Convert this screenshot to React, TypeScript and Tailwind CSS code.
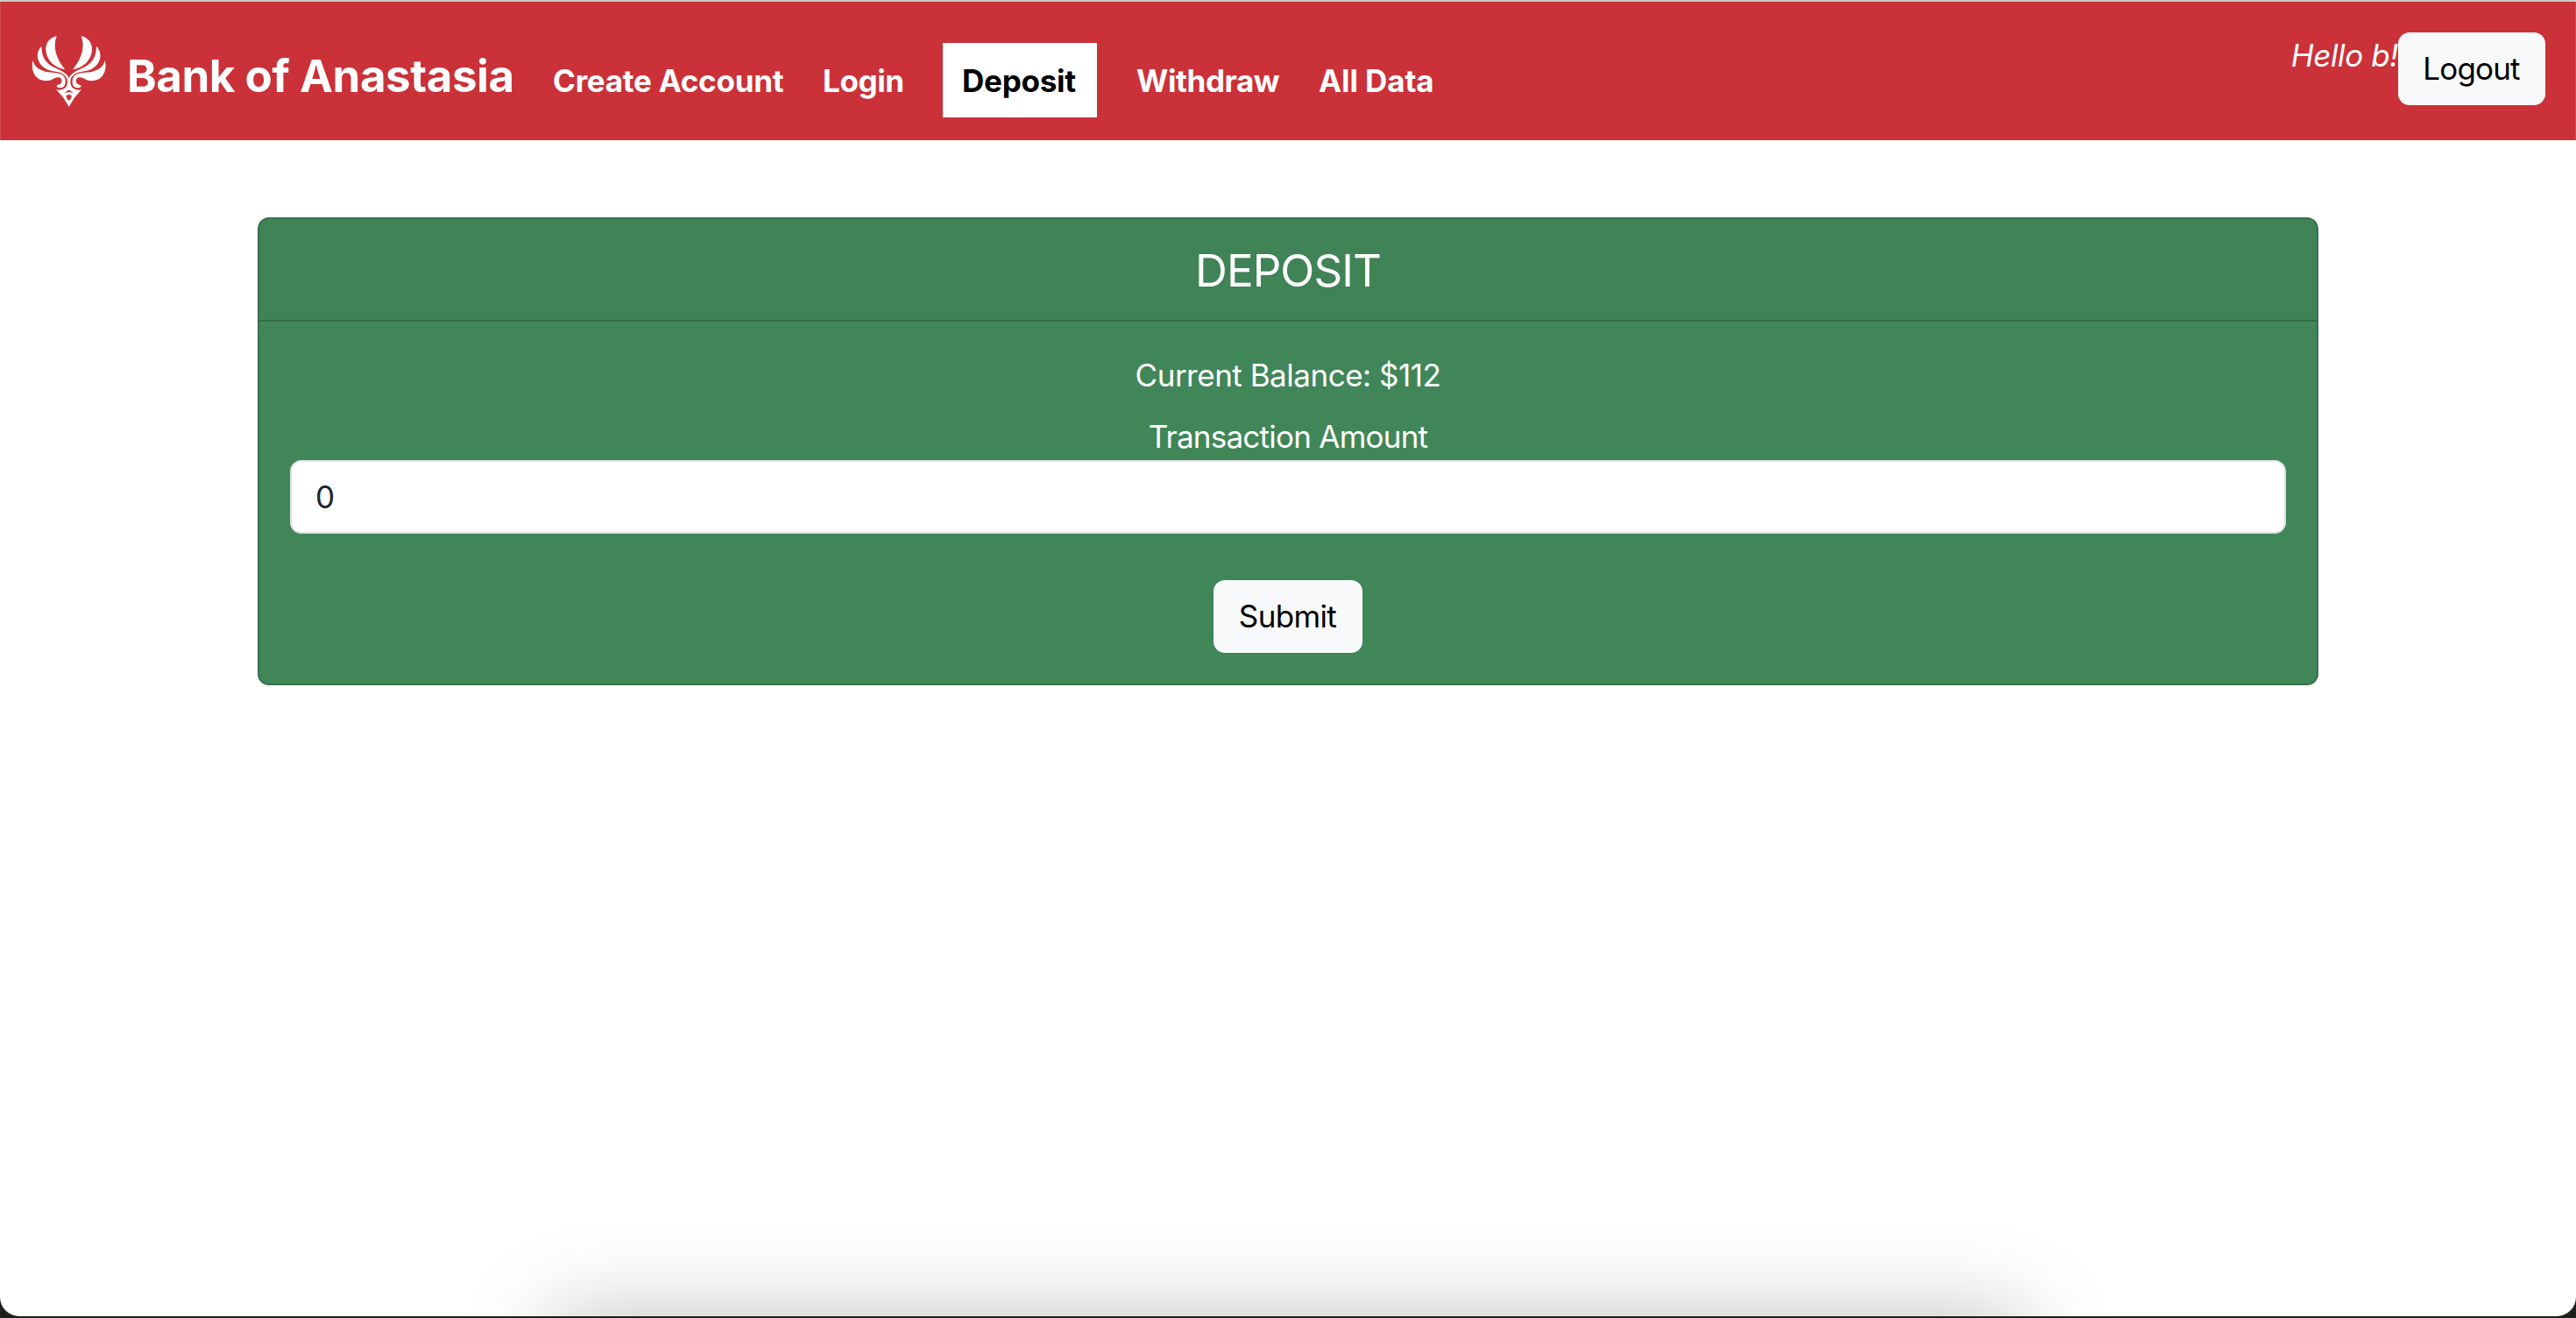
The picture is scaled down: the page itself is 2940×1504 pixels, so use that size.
import type { ReactNode } from 'react';

function WingHalf() {
  return (
    <g fill="#fff">
      <path d="M134 63C109 70 96 87 97 111C99 146 125 171 163 178C134 145 119 100 134 63Z" />
      <path d="M82 98C70 110 66 126 70 142C77 168 100 182 130 185C156 188 170 200 171 218C171 228 168 234 164 241H176.5V209C172 196 160 187 134 175C102 161 82 141 82 98Z" />
      <path d="M53 147C48 164 50 182 60 198C70 213 88 218 105 216C121 214 128 203 141 205C152 207 154 217 149 225C144 231 135 229 134 235C135 242 150 243 158 237C167 228 167 203 152 195C138 188 115 189 96 185C72 179 58 168 53 147Z" />
      <path d="M132 245C140 250 152 249 164 240H176.5V247L160 258L176.5 255V263L166 268L171 281L176.5 284V306L158 276Z" />
    </g>
  );
}

function Logo() {
  return (
    <svg viewBox="48 60 258 249" className="mt-[38px] h-[83px] w-[86px] shrink-0" aria-hidden="true">
      <WingHalf />
      <g transform="translate(352 0) scale(-1 1)">
        <WingHalf />
      </g>
    </svg>
  );
}

function NavItem({ children, className = '' }: { children: ReactNode; className?: string }) {
  return (
    <a href="#" className={`flex h-[85px] items-center px-[22px] pt-px ${className}`}>
      {children}
    </a>
  );
}

function LightButton({ children, className = '' }: { children: ReactNode; className?: string }) {
  return (
    <button
      type="button"
      className={`flex h-[83px] items-center justify-center rounded-[13px] bg-[#f8f9fb] pr-px pb-[2px] text-black ${className}`}
    >
      {children}
    </button>
  );
}

export default function App() {
  return (
    <div className="relative h-[1504px] w-full overflow-hidden bg-[#1c211c] font-['Inter',sans-serif] text-[35px] leading-[54px]">
      <div className="h-[1502px] overflow-hidden rounded-b-[22px] border-t-2 border-[#c9c9c9] bg-white">
        <header className="flex h-[158px] items-start border-x border-[#d04a50] bg-[#cb3138] pr-[34px] pl-[35px] text-white">
          <Logo />
          <a href="#" className="mt-[45px] ml-[23px] w-[464px] text-[51px] leading-[80px] font-bold tracking-[-0.43px] whitespace-nowrap">
            Bank of Anastasia
          </a>
          <nav className="mt-[47px] flex font-bold tracking-[-0.25px] whitespace-nowrap">
            <NavItem className="w-[308px]">Create Account</NavItem>
            <NavItem className="w-[159px] tracking-[-0.4px]">Login</NavItem>
            <NavItem className="w-[176px] bg-white text-black">Deposit</NavItem>
            <NavItem className="ml-[23px] w-[208px] tracking-[-0.4px]">Withdraw</NavItem>
            <NavItem className="tracking-[-0.1px]">All Data</NavItem>
          </nav>
          <p className="mt-[34px] ml-auto tracking-[-0.39px] whitespace-nowrap italic">Hello b!</p>
          <LightButton className="mt-[35px] w-[168px] tracking-[-0.85px]">Logout</LightButton>
        </header>

        <main className="mt-[88px] flex justify-center">
          <section className="h-[534px] w-[2352px] overflow-hidden rounded-[13px] border-2 border-[#38704b] bg-[#418658] text-center text-white">
            <h1 className="flex h-[117px] items-center justify-center border-b-2 border-[#356a47] bg-[#408356] pt-[2px] text-[51px] tracking-[-0.91px]">
              DEPOSIT
            </h1>
            <form className="flex flex-col px-[35px] pt-[34px]">
              <p className="tracking-[-0.48px]">Current Balance: $112</p>
              <label htmlFor="amount" className="mt-4 tracking-[-0.76px]">
                Transaction Amount
              </label>
              <input
                id="amount"
                defaultValue="0"
                className="h-[84px] w-full rounded-[13px] border-2 border-[#dee2e6] bg-white px-[27px] text-[#212529] outline-none"
              />
              <LightButton className="mt-[53px] w-[170px] self-center tracking-[-0.64px]">Submit</LightButton>
            </form>
          </section>
        </main>

        {/* soft shadow of the dock below the window */}
        <div className="pointer-events-none absolute top-[1502px] left-[630px] h-[200px] w-[1680px] shadow-[0_0_100px_rgba(0,0,0,0.25)]" />
      </div>
    </div>
  );
}
